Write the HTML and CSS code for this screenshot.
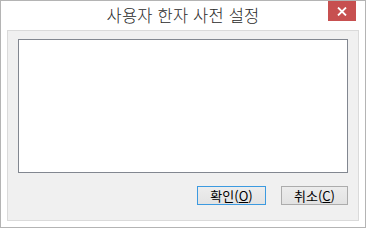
FILE: index.html
```html
<!DOCTYPE html>
<html lang="ko">
<head>
<meta charset="utf-8">
<link rel="stylesheet" href="styles.css">
</head>
<body>
<div class="window">
  <div class="titlebar">
    <div class="title">사용자 한자 사전 설정</div>
    <div class="close">
      <svg width="10" height="9" viewBox="0 0 10 9"><path d="M1 0.5 L9 8.5 M9 0.5 L1 8.5" stroke="#fff" stroke-width="1.8" fill="none"/></svg>
    </div>
  </div>
  <div class="client">
    <div class="list"></div>
    <div class="buttons">
      <div class="btn btn-default">확인(<u>O</u>)</div>
      <div class="btn btn-cancel">취소(<u>C</u>)</div>
    </div>
  </div>
</div>
</body>
</html>
```
FILE: styles.css
```css
html, body {
  margin: 0;
  padding: 0;
  background: #ffffff;
}
body {
  font-family: "Noto Sans CJK KR", "Noto Sans", sans-serif;
}
.window {
  width: 366px;
  height: 228px;
  box-sizing: border-box;
  border: 1px solid #b4b4b4;
  background: #ffffff;
  padding: 0 6px 6px 6px;
  display: flex;
  flex-direction: column;
}
.titlebar {
  position: relative;
  height: 29px;
  flex: none;
}
.title {
  text-align: center;
  font-size: 16.5px;
  line-height: 28px;
  color: #2a2a2a;
  font-weight: 300;
  letter-spacing: 0.2px;
}
.close {
  position: absolute;
  right: 3px;
  top: 0;
  width: 28px;
  height: 20px;
  background: #c75050;
  display: flex;
  align-items: center;
  justify-content: center;
}
.close svg { display: block; }
.client {
  flex: 1;
  border: 1px solid #dadada;
  background: #f0f0f0;
  padding: 8px 10px 15px 10px;
  display: flex;
  flex-direction: column;
}
.list {
  height: 134px;
  box-sizing: border-box;
  border: 1px solid #828790;
  background: #ffffff;
}
.buttons {
  margin-top: 13px;
  display: flex;
  justify-content: flex-end;
  gap: 15px;
}
.btn {
  height: 19px;
  box-sizing: border-box;
  font-size: 13px;
  line-height: 17px;
  color: #000;
  text-align: center;
}
.btn u {
  text-decoration: underline;
  text-underline-offset: 1px;
}
.btn-default {
  width: 69px;
  border: 1px solid #3c9ae0;
  background: linear-gradient(#ededed, #e3e3e3);
}
.btn-cancel {
  width: 67px;
  border: 1px solid #acacac;
  background: linear-gradient(#ececec, #e2e2e2);
}
```
